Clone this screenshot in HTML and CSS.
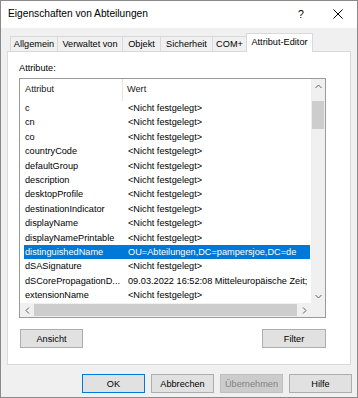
FILE: index.html
```html
<!DOCTYPE html>
<html lang="de">
<head>
    <meta charset="UTF-8">
    <title>Eigenschaften von Abteilungen</title>
    <link rel="stylesheet" href="styles.css">
</head>
<body>
    <div class="window">
        <!-- Title bar -->
        <div class="titlebar">
            <span class="title">Eigenschaften von Abteilungen</span>
            <span class="help">?</span>
            <svg class="close" width="10" height="10" viewBox="0 0 10 10">
                <path d="M0.5 0.5 L9.5 9.5 M9.5 0.5 L0.5 9.5" stroke="#000" stroke-width="1" fill="none"/>
            </svg>
        </div>

        <!-- Tabs -->
        <div class="tabs">
            <div class="tab w-allg">Allgemein</div>
            <div class="tab w-verw">Verwaltet von</div>
            <div class="tab w-obj">Objekt</div>
            <div class="tab w-sich">Sicherheit</div>
            <div class="tab w-com">COM+</div>
            <div class="tab tab-active w-attr">Attribut-Editor</div>
        </div>

        <!-- Tab page -->
        <div class="panel">
            <div class="label">Attribute:</div>
            <div class="list">
                <div class="list-body">
                    <div class="list-header">
                        <div class="hcell hcell-name">Attribut</div>
                        <div class="hcell">Wert</div>
                    </div>
                    <div id="rows"></div>
                </div>
                <div class="vscroll">
                    <div class="sb-btn">
                        <svg width="7" height="5" viewBox="0 0 7 5"><path d="M0.5 4 L3.5 1 L6.5 4" stroke="#606060" fill="none"/></svg>
                    </div>
                    <div class="vtrack"><div class="vthumb"></div></div>
                    <div class="sb-btn">
                        <svg width="7" height="5" viewBox="0 0 7 5"><path d="M0.5 1 L3.5 4 L6.5 1" stroke="#606060" fill="none"/></svg>
                    </div>
                </div>
                <div class="hscroll">
                    <div class="sb-btn">
                        <svg width="5" height="7" viewBox="0 0 5 7"><path d="M4 0.5 L1 3.5 L4 6.5" stroke="#606060" fill="none"/></svg>
                    </div>
                    <div class="hthumb"></div>
                    <div class="sb-btn">
                        <svg width="5" height="7" viewBox="0 0 5 7"><path d="M1 0.5 L4 3.5 L1 6.5" stroke="#606060" fill="none"/></svg>
                    </div>
                </div>
                <div class="corner"></div>
            </div>
            <div class="panel-buttons">
                <button class="btn btn-ansicht">Ansicht</button>
                <button class="btn btn-filter">Filter</button>
            </div>
        </div>

        <!-- Dialog buttons -->
        <div class="footer">
            <button class="btn btn-default">OK</button>
            <button class="btn">Abbrechen</button>
            <button class="btn btn-disabled">Übernehmen</button>
            <button class="btn">Hilfe</button>
        </div>
    </div>

    <script>
        const notSet = '<Nicht festgelegt>';
        const attributes = [
            ['c', notSet],
            ['cn', notSet],
            ['co', notSet],
            ['countryCode', notSet],
            ['defaultGroup', notSet],
            ['description', notSet],
            ['desktopProfile', notSet],
            ['destinationIndicator', notSet],
            ['displayName', notSet],
            ['displayNamePrintable', notSet],
            ['distinguishedName', 'OU=Abteilungen,DC=pampersjoe,DC=de'],
            ['dSASignature', notSet],
            ['dSCorePropagationD...', '09.03.2022 16:52:08 Mitteleuropäische Zeit;'],
            ['extensionName', notSet]
        ];

        const rows = document.getElementById('rows');
        attributes.forEach(([name, value]) => {
            const row = document.createElement('div');
            row.className = 'row' + (name === 'distinguishedName' ? ' row-selected' : '');
            const nameCell = document.createElement('div');
            nameCell.className = 'cell cell-name';
            nameCell.textContent = name;
            const valueCell = document.createElement('div');
            valueCell.className = 'cell cell-value';
            valueCell.textContent = value;
            row.append(nameCell, valueCell);
            rows.appendChild(row);
        });
    </script>
</body>
</html>
```

FILE: styles.css
```css
:root {
    --face: #f0f0f0;
    --tab-border: #d9d9d9;
    --btn-face: #e1e1e1;
    --btn-border: #adadad;
    --accent: #0078d7;
    --font: "Liberation Sans", Arial, sans-serif;
}

* {
    box-sizing: border-box;
}

body {
    margin: 0;
    font-family: var(--font);
    font-size: 9.2px;
    color: #000;
}

.window {
    width: 358px;
    height: 398px;
    border: 1px solid #8a8a8a;
    background-color: var(--face);
    overflow: hidden;
}

/* Title bar */
.titlebar {
    height: 27px;
    background-color: #fff;
    display: flex;
    align-items: center;
    padding-left: 7px;
    padding-bottom: 2px;
}

.title {
    font-size: 10.2px;
    flex: 1;
}

.help {
    font-size: 10.5px;
    width: 10px;
    margin-right: 25px;
}

.close {
    margin-right: 14px;
}

/* Tabs */
.tabs {
    display: flex;
    align-items: flex-end;
    height: 23px;
    padding-left: 9px;
}

.tab {
    height: 15px;
    line-height: 14px;
    text-align: center;
    border: 1px solid var(--tab-border);
    border-bottom: none;
    margin-right: -1px;
    background-color: var(--face);
    white-space: nowrap;
}

.tab-active {
    height: 19px;
    line-height: 17px;
    background-color: #fff;
    margin-bottom: -1px;
    position: relative;
    z-index: 1;
    padding-bottom: 2px;
}

.w-allg { width: 48px; }
.w-verw { width: 66px; }
.w-obj  { width: 39px; }
.w-sich { width: 53px; }
.w-com  { width: 35px; }
.w-attr { width: 67px; }

/* Tab page */
.panel {
    margin: 0 6px;
    height: 314px;
    background-color: #fff;
    border: 1px solid var(--tab-border);
}

.label {
    margin: 10px 0 0 11px;
    line-height: 12px;
}

.list {
    margin: 4px 0 0 11px;
    width: 307px;
    height: 240px;
    border: 1px solid #9a9a9a;
    display: grid;
    grid-template-columns: 1fr 14px;
    grid-template-rows: 1fr 14px;
    background-color: #fff;
}

.list-body {
    overflow: hidden;
}

.list-header {
    display: flex;
    height: 22px;
    line-height: 20px;
    color: #1a1a1a;
}

.hcell {
    padding-left: 4px;
    white-space: nowrap;
}

.hcell-name {
    width: 103px;
    padding-left: 5px;
    border-right: 1px solid #e5e5e5;
}

.row {
    display: flex;
    height: 14.4px;
    line-height: 14.4px;
    margin-left: 4px;
    width: 286px;
    white-space: nowrap;
    overflow: hidden;
}

.row-selected {
    background-color: var(--accent);
    color: #fff;
}

.cell-name {
    width: 99px;
    flex-shrink: 0;
    padding-left: 1px;
    overflow: hidden;
}

.cell-value {
    padding-left: 5px;
}

/* Scrollbars */
.vscroll {
    display: flex;
    flex-direction: column;
    background-color: var(--face);
}

.sb-btn {
    width: 14px;
    height: 14px;
    display: flex;
    align-items: center;
    justify-content: center;
    flex-shrink: 0;
}

.vtrack {
    flex: 1;
    padding-top: 8px;
}

.vthumb {
    height: 28px;
    margin: 0 1px;
    background-color: #cdcdcd;
}

.hscroll {
    display: flex;
    align-items: center;
    background-color: var(--face);
}

.hthumb {
    flex: 1;
    height: 12px;
    background-color: #cdcdcd;
}

.corner {
    background-color: var(--face);
}

/* Buttons */
.btn {
    height: 19px;
    padding: 0;
    font-family: var(--font);
    font-size: 9.2px;
    color: #000;
    background-color: var(--btn-face);
    border: 1px solid var(--btn-border);
}

.panel-buttons {
    display: flex;
    justify-content: space-between;
    width: 318px;
    margin-top: 11px;
    padding-left: 12px;
}

.btn-ansicht {
    width: 63px;
}

.btn-filter {
    width: 64px;
}

.footer {
    display: flex;
    justify-content: flex-end;
    gap: 6px;
    margin-top: 9px;
    padding-right: 5px;
}

.footer .btn {
    width: 63px;
}

.btn-default {
    border-color: var(--accent);
}

.btn-disabled {
    background-color: #cccccc;
    border-color: #bfbfbf;
    color: #838383;
}
```
